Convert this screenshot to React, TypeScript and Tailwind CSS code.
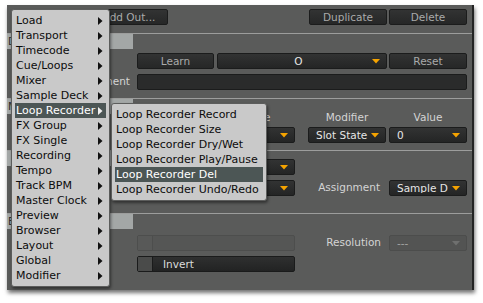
import React from 'react';

// Small orange drop-down arrow
const DownArrow = ({ color = '#f5a300' }: { color?: string }) => (
  <svg width="8" height="5" viewBox="0 0 8 5" className="shrink-0">
    <path d="M0 0h8L4 4.5z" fill={color} />
  </svg>
);

// Black submenu arrow
const RightArrow = ({ color = '#111' }: { color?: string }) => (
  <svg width="5" height="8" viewBox="0 0 5 8" className="shrink-0">
    <path d="M0 0l4.5 4L0 8z" fill={color} />
  </svg>
);

const Btn: React.FC<{ label: string; className?: string }> = ({ label, className = '' }) => (
  <div
    className={`h-[16px] flex items-center justify-center rounded-[2px] border border-[#1b1c1c] bg-gradient-to-b from-[#323333] to-[#262727] text-[#a9aaaa] leading-none ${className}`}
  >
    {label}
  </div>
);

const Drop: React.FC<{ value?: string; className?: string; center?: boolean; disabled?: boolean }> = ({
  value = '',
  className = '',
  center = false,
  disabled = false,
}) => (
  <div
    className={`h-[16px] flex items-center rounded-[2px] border pl-[7px] pr-[6px] leading-none ${
      disabled
        ? 'border-[#4c4d4c] bg-[#535453] text-[#a5a6a5]'
        : 'border-[#1b1c1c] bg-gradient-to-b from-[#323333] to-[#242525] text-[#e6e6e6]'
    } ${className}`}
  >
    <span className={`flex-1 truncate ${center ? 'text-center' : ''}`}>{value}</span>
    <DownArrow color={disabled ? '#6f706f' : '#f5a300'} />
  </div>
);

const Check: React.FC<{ label?: string; disabled?: boolean }> = ({ label, disabled = false }) => (
  <div
    className={`h-[16px] w-[158px] flex items-center rounded-[2px] border ${
      disabled
        ? 'border-[#4d4e4d] bg-[#555655]'
        : 'border-[#1a1b1b] bg-gradient-to-b from-[#2f3030] to-[#222323]'
    }`}
  >
    <div
      className={`h-full w-[15px] border-r ${
        disabled ? 'bg-[#585958] border-[#4d4e4d]' : 'bg-[#4a4b4a] border-[#1a1b1b]'
      }`}
    />
    {label && <span className="ml-[10px] text-[#dcdcdc] leading-none">{label}</span>}
  </div>
);

const SectionTab: React.FC<{ title?: string }> = ({ title }) => (
  <div className="h-[15px] w-[126px] bg-[#a3a7a6] text-[#2c2d2d] leading-[15px] pl-[1px] overflow-hidden whitespace-nowrap">
    {title}
  </div>
);

const mainItems = [
  'Load',
  'Transport',
  'Timecode',
  'Cue/Loops',
  'Mixer',
  'Sample Deck',
  'Loop Recorder',
  'FX Group',
  'FX Single',
  'Recording',
  'Tempo',
  'Track BPM',
  'Master Clock',
  'Preview',
  'Browser',
  'Layout',
  'Global',
  'Modifier',
];

const subItems = [
  'Loop Recorder Record',
  'Loop Recorder Size',
  'Loop Recorder Dry/Wet',
  'Loop Recorder Play/Pause',
  'Loop Recorder Del',
  'Loop Recorder Undo/Redo',
];

export default function App() {
  return (
    <div className="relative w-[483px] h-[303px] overflow-hidden bg-white pl-[7px] pt-[5px] font-['DejaVu_Sans',sans-serif] text-[10.5px]">
      {/* Panel */}
      <div className="w-[467px] h-[285px] bg-[#5a5b5a] border-r-2 border-r-[#232424] shadow-[1px_3px_4px_rgba(0,0,0,0.55)] flex flex-col">
        {/* Top buttons */}
        <div className="flex pt-[4px] pr-[5px]">
          <Btn label="Add Out..." className="ml-[83px] w-[78px]" />
          <Btn label="Duplicate" className="ml-auto w-[78px]" />
          <Btn label="Delete" className="ml-[2px] w-[78px]" />
        </div>

        {/* Section 1 */}
        <div className="mt-[8px] border-t border-[#9c9d9c] flex">
          <div className="w-[130px] flex flex-col">
            <SectionTab title="D" />
            <div className="mt-[25px] h-[16px] flex items-center justify-end pr-[7px] text-[#d4d4d4]">Comment</div>
          </div>
          <div className="flex flex-col pt-[19px] pb-[8px] gap-[5px]">
            <div className="flex">
              <Btn label="Learn" className="w-[77px]" />
              <Drop value="O" center className="ml-[3px] w-[170px]" />
              <Btn label="Reset" className="ml-[2px] w-[78px]" />
            </div>
            <div className="h-[16px] w-[330px] rounded-[2px] border border-[#1b1c1c] bg-[#2a2b2b]" />
          </div>
        </div>

        {/* Section 2 */}
        <div className="border-t border-[#9c9d9c] flex">
          <div className="w-[130px]">
            <SectionTab title="M" />
          </div>
          <div className="flex flex-col pt-[12px] pb-[7px]">
            <div className="flex h-[13px] items-center text-[#d4d4d4] leading-none">
              <div className="w-[77px]" />
              <div className="ml-[3px] w-[78px] text-center">Value</div>
              <div className="ml-[13px] w-[78px] text-center">Modifier</div>
              <div className="ml-[3px] w-[78px] text-center">Value</div>
            </div>
            <div className="flex mt-[3px]">
              <Drop className="w-[77px]" />
              <Drop className="ml-[3px] w-[78px]" />
              <Drop value="Slot State" className="ml-[13px] w-[78px]" />
              <Drop value="0" className="ml-[3px] w-[78px]" />
            </div>
          </div>
        </div>

        {/* Section 3 */}
        <div className="border-t border-[#9c9d9c] flex">
          <div className="w-[130px]">
            <SectionTab />
          </div>
          <div className="flex flex-col pt-[8px] pb-[17px] gap-[5px]">
            <div className="flex">
              <Drop className="w-[158px]" />
            </div>
            <div className="flex items-center">
              <Drop className="w-[158px]" />
              <div className="ml-[13px] w-[78px] text-right pr-[6px] text-[#d4d4d4]">Assignment</div>
              <Drop value="Sample D" className="ml-[3px] w-[78px]" />
            </div>
          </div>
        </div>

        {/* Section 4 */}
        <div className="border-t border-[#9c9d9c] flex">
          <div className="w-[130px]">
            <SectionTab title="E" />
          </div>
          <div className="flex flex-col pt-[21px] gap-[5px]">
            <div className="flex items-center">
              <Check disabled />
              <div className="ml-[13px] w-[78px] text-right pr-[5px] text-[#d4d4d4]">Resolution</div>
              <Drop value="---" disabled className="ml-[3px] w-[78px]" />
            </div>
            <div className="flex">
              <Check label="Invert" />
            </div>
          </div>
        </div>
      </div>

      {/* Main context menu */}
      <div className="absolute left-[11px] top-[9px] w-[99px] rounded-[3px] border border-[#5c5d5c] bg-[#c9c9c9] py-[3px] px-[3px] text-[11px] shadow-[1px_2px_3px_rgba(0,0,0,0.45)]">
        {mainItems.map((item) => {
          const active = item === 'Loop Recorder';
          return (
            <div
              key={item}
              className={`h-[15px] flex items-center pl-[1px] pr-[3px] leading-none whitespace-nowrap ${
                active ? 'bg-[#4c5655] text-white' : 'text-[#0c0c0c]'
              }`}
            >
              <span className="flex-1">{item}</span>
              <RightArrow color={active ? '#f0f0f0' : '#111'} />
            </div>
          );
        })}
      </div>

      {/* Submenu */}
      <div className="absolute left-[111px] top-[103px] w-[156px] rounded-[3px] border border-[#5c5d5c] bg-[#c9c9c9] py-[3px] px-[3px] text-[11px] shadow-[1px_2px_3px_rgba(0,0,0,0.45)]">
        {subItems.map((item) => {
          const active = item === 'Loop Recorder Del';
          return (
            <div
              key={item}
              className={`h-[15px] flex items-center pl-[1px] leading-none whitespace-nowrap ${
                active ? 'bg-[#4c5655] text-white' : 'text-[#0c0c0c]'
              }`}
            >
              {item}
            </div>
          );
        })}
      </div>
    </div>
  );
}
